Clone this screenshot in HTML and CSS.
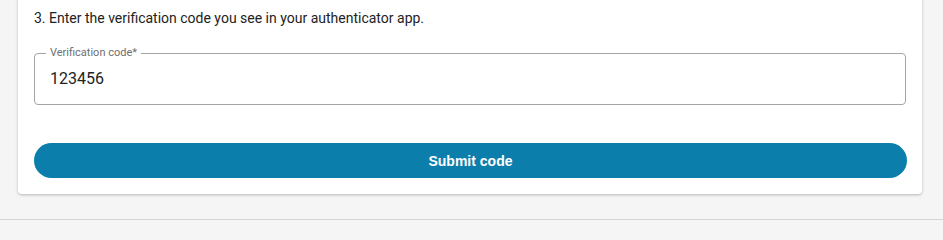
FILE: index.html
```html
<!DOCTYPE html>
<html lang="en">
<head>
<meta charset="utf-8">
<title>Verification</title>
<link rel="stylesheet" href="styles.css">
</head>
<body>
<div class="page">
  <div class="card">
    <p class="step">3. Enter the verification code you see in your authenticator app.</p>
    <div class="field">
      <span class="field-label">Verification code*</span>
      <span class="field-value">123456</span>
    </div>
    <button class="submit" type="button">Submit code</button>
  </div>
</div>
<div class="footer-line"></div>
</body>
</html>
```
FILE: styles.css
```css
html, body {
  margin: 0;
  padding: 0;
  background: #f5f5f5;
  font-family: Roboto, "Liberation Sans", Arial, sans-serif;
  color: #212121;
  overflow: hidden;
}
.page {
  display: flow-root;
  padding: 0 21px 0 18px;
  height: 219px;
  box-sizing: border-box;
}
.card {
  margin-top: -8px;
  background: #ffffff;
  border-radius: 4px;
  box-shadow: 0 1px 3px rgba(0,0,0,0.25);
  padding: 16px 16px 16px 16px;
}
.step {
  margin: 0;
  font-size: 14px;
  line-height: 20px;
  color: #222;
}
.field {
  position: relative;
  margin-top: 25px;
  height: 50px;
  border: 1px solid #a5a5a5;
  border-radius: 4px;
  display: flex;
  align-items: center;
  padding-left: 15px;
}
.field-label {
  position: absolute;
  top: -8px;
  left: 11px;
  padding: 0 4px;
  background: #fff;
  font-size: 11px;
  line-height: 14px;
  color: #6f6f6f;
}
.field-value {
  font-size: 16px;
  color: #222;
  margin-top: -2px;
}
.submit {
  display: block;
  width: calc(100% + 1px);
  margin-top: 38px;
  height: 35px;
  border: none;
  border-radius: 18px;
  background: #0c7eab;
  color: #fff;
  font-family: "Liberation Sans", Arial, sans-serif;
  font-weight: bold;
  font-size: 14px;
  cursor: pointer;
}
.footer-line {
  border-top: 1px solid #d4d4d4;
  height: 3px;
  background: #f5f5f5;
}
```
